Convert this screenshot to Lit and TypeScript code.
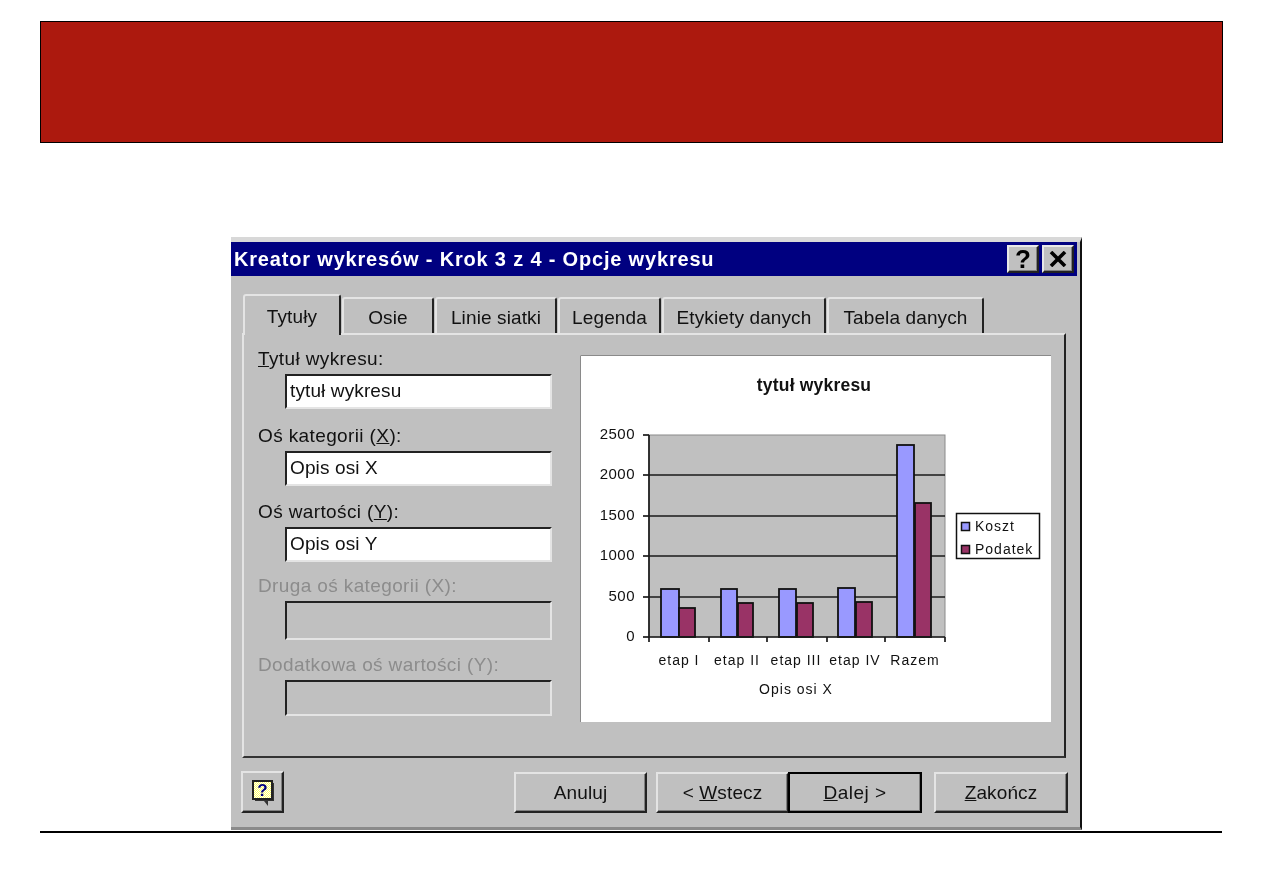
import { LitElement, html, css, svg } from "lit";
import { customElement } from "lit/decorators.js";

const TABS = [
  { label: "Osie", w: 92 },
  { label: "Linie siatki", w: 122 },
  { label: "Legenda", w: 103 },
  { label: "Etykiety danych", w: 164 },
  { label: "Tabela danych", w: 157 },
];
const GRID = [475, 516, 556, 597];
const YLABELS = [["2500", 434], ["2000", 474], ["1500", 515], ["1000", 555], ["500", 596], ["0", 636]] as const;
const TICKS = [649, 709, 767, 827, 885, 945];
const BARS = [
  [661, 18, 589, "#9999ff"], [679, 16, 608, "#993366"],
  [721, 16, 589, "#9999ff"], [738, 15, 603, "#993366"],
  [779, 17, 589, "#9999ff"], [797, 16, 603, "#993366"],
  [838, 17, 588, "#9999ff"], [856, 16, 602, "#993366"],
  [897, 17, 445, "#9999ff"], [915, 16, 503, "#993366"],
] as const;
const CATS = [["etap I", 679], ["etap II", 737], ["etap III", 796], ["etap IV", 855], ["Razem", 915]] as const;

@customElement("app-root")
export class AppRoot extends LitElement {
  static styles = css`
    :host { display: block; background: #fff; height: 893px; overflow: hidden; font-family: "Liberation Sans", Arial, sans-serif; }
    .page { padding: 21px 40px 0; }
    .banner { height: 122px; box-sizing: border-box; background: #ac190e; border: 1px solid #000; }
    .dialog {
      box-sizing: border-box; width: 851px; height: 593px; margin: 94px 0 0 191px;
      background: #c0c0c0; border-top: 5px solid #d8d8d8; border-right: 2px solid #111; border-bottom: 3px solid #8a8a8a;
      filter: blur(0.4px); color: #111; font-size: 19px; letter-spacing: 0.12px;
    }
    .title {
      height: 34px; margin-right: 3px; background: #000080; color: #fff; display: flex; align-items: center;
      padding: 0 3px; font-weight: 700; font-size: 20px; letter-spacing: 0.82px;
    }
    .title span { flex: 1; white-space: nowrap; }
    .cap {
      box-sizing: border-box; width: 32px; height: 28px; margin-left: 3px; background: #c0c0c0; color: #000;
      border: 2px solid; border-color: #e8e8e8 #222 #222 #e8e8e8; box-shadow: inset -1px -1px 0 #808080;
      display: flex; align-items: center; justify-content: center;
      font-size: 26px; font-weight: 700; line-height: 1; letter-spacing: 0;
    }
    .tabs { display: flex; align-items: flex-end; height: 39px; margin: 18px 0 0 12px; position: relative; z-index: 1; }
    .tab {
      box-sizing: border-box; height: 36px; margin-right: 1px; padding-top: 3px; border: 2px solid; border-bottom: 0;
      border-color: #e4e4e4 #222 transparent #e4e4e4; border-top-left-radius: 3px; border-top-right-radius: 3px;
      display: flex; align-items: center; justify-content: center; white-space: nowrap; background: #c0c0c0;
    }
    .tab.active { width: 98px; height: 41px; margin: 0 1px -2px 0; padding-top: 2px; }
    .panel {
      box-sizing: border-box; width: 824px; height: 425px; margin-left: 11px; display: flex;
      border: 2px solid; border-color: #e4e4e4 #222 #333 #e4e4e4;
    }
    .fields {
      box-sizing: border-box; width: 336px; padding: 14px 0 0 14px; display: grid;
      grid-template-rows: 77px 76px 74px 79px 61px;
    }
    .label { height: 25px; line-height: 20px; white-space: nowrap; letter-spacing: 0.38px; }
    .off .label { color: #8c8c8c; }
    .input {
      box-sizing: border-box; width: 267px; height: 35px; margin-left: 27px; padding-left: 3px; background: #fff; color: #111;
      border: 2px solid; border-color: #222 #e4e4e4 #e4e4e4 #222; line-height: 29px; white-space: nowrap;
    }
    .off .input { background: #c0c0c0; }
    .f4 .input { height: 39px; }
    .f5 .input { height: 36px; }
    .preview { margin-top: 20px; width: 471px; height: 367px; background: #fff; display: block; }
    .preview text { font-family: "Liberation Sans", Arial, sans-serif; fill: #111; font-size: 14px; letter-spacing: 1px; }
    .preview .y { font-size: 15px; letter-spacing: 0.5px; }
    .preview .t { font-size: 17.5px; font-weight: 700; letter-spacing: 0.2px; }
    .footer { display: flex; align-items: flex-start; margin: 13px 12px 0 10px; }
    .btn {
      box-sizing: border-box; width: 134px; height: 41px; margin-top: 1px; background: #c0c0c0;
      border: 2px solid; border-color: #e4e4e4 #222 #222 #e4e4e4; box-shadow: inset -1px -1px 0 #808080;
      display: flex; align-items: center; justify-content: center;
      white-space: nowrap; position: relative;
    }
    .help { width: 43px; height: 42px; margin-top: 0; margin-right: auto; }
    .short { width: 133px; }
    .btn.back { margin: 1px -1px 0 9px; }
    .btn.default { outline: 2px solid #000; outline-offset: -2px; z-index: 1; margin-right: 12px; letter-spacing: 0.5px; }
    .hr { height: 2px; width: 1182px; margin-top: 1px; background: #000; }
  `;

  private chart() {
    return svg`
      <svg class="preview" viewBox="580 355 471 367">
        <path d="M580.5 722V355.5H1051" fill="none" stroke="#8a8a8a" stroke-width="1"/>
        <text class="t" x="814" y="391" text-anchor="middle">tytuł wykresu</text>
        <rect x="649" y="435" width="296" height="202" fill="#c0c0c0" stroke="#8a8a8a"/>
        ${GRID.map(y => svg`<line x1="649" x2="945" y1=${y} y2=${y} stroke="#1a1a1a" stroke-width="1.7"/>`)}
        ${BARS.map(([x, w, y, c]) => svg`<rect x=${x} y=${y} width=${w} height=${637 - y} fill=${c} stroke="#111" stroke-width="1.8"/>`)}
        <path d="M649 435V637H945" fill="none" stroke="#1a1a1a" stroke-width="1.7"/>
        ${YLABELS.map(([t, y]) => svg`<line x1="643" x2="649" y1=${y + 1} y2=${y + 1} stroke="#1a1a1a" stroke-width="1.7"/><text class="y" x="635" y=${y + 5} text-anchor="end">${t}</text>`)}
        ${TICKS.map(x => svg`<line x1=${x} x2=${x} y1="637" y2="642" stroke="#1a1a1a" stroke-width="1.7"/>`)}
        ${CATS.map(([t, x]) => svg`<text x=${x} y="665" text-anchor="middle">${t}</text>`)}
        <text x="796" y="694" text-anchor="middle">Opis osi X</text>
        <rect x="956.5" y="513.5" width="83" height="45" fill="#fff" stroke="#111" stroke-width="1.5"/>
        <rect x="961.5" y="522.5" width="8" height="8" fill="#9999ff" stroke="#111" stroke-width="1.5"/>
        <rect x="961.5" y="545.5" width="8" height="8" fill="#993366" stroke="#111" stroke-width="1.5"/>
        <text x="975" y="531">Koszt</text>
        <text x="975" y="554">Podatek</text>
      </svg>`;
  }

  render() {
    return html`
      <div class="page">
        <div class="banner"></div>
        <div class="dialog">
          <div class="title">
            <span>Kreator wykresów - Krok 3 z 4 - Opcje wykresu</span>
            <div class="cap">?</div>
            <div class="cap">
              <svg width="18" height="16" viewBox="0 0 18 16"><path d="M2 1L16 15M16 1L2 15" stroke="#000" stroke-width="3.6"/></svg>
            </div>
          </div>
          <div class="tabs">
            <div class="tab active">Tytuły</div>
            ${TABS.map(t => html`<div class="tab" style="width:${t.w}px">${t.label}</div>`)}
          </div>
          <div class="panel">
            <div class="fields">
              <div><div class="label"><u>T</u>ytuł wykresu:</div><div class="input">tytuł wykresu</div></div>
              <div><div class="label">Oś kategorii (<u>X</u>):</div><div class="input">Opis osi X</div></div>
              <div><div class="label">Oś wartości (<u>Y</u>):</div><div class="input">Opis osi Y</div></div>
              <div class="off f4"><div class="label">Druga oś kategorii (X):</div><div class="input"></div></div>
              <div class="off f5"><div class="label">Dodatkowa oś wartości (Y):</div><div class="input"></div></div>
            </div>
            ${this.chart()}
          </div>
          <div class="footer">
            <div class="btn help">
              <svg width="27" height="30" viewBox="-3 -3 27 30">
                <defs>
                  <pattern id="dots" width="2" height="2" patternUnits="userSpaceOnUse">
                    <rect width="2" height="2" fill="#ffffff"/>
                    <rect width="1" height="1" fill="#ffff66"/>
                    <rect x="1" y="1" width="1" height="1" fill="#ffff66"/>
                  </pattern>
                </defs>
                <path d="M3 3H22V21H16V26L12 21H3Z" fill="#333"/>
                <path d="M1 1H20V19H1Z" fill="url(#dots)" stroke="#222" stroke-width="2"/>
                <text x="10.5" y="16" text-anchor="middle" font-family="Liberation Sans" font-weight="700" font-size="17" fill="#000080">?</text>
              </svg>
            </div>
            <div class="btn short">Anuluj</div>
            <div class="btn short back"><span>&lt; <u>W</u>stecz</span></div>
            <div class="btn default"><span><u>D</u>alej &gt;</span></div>
            <div class="btn"><u>Z</u>akończ</div>
          </div>
        </div>
        <div class="hr"></div>
      </div>
    `;
  }
}
